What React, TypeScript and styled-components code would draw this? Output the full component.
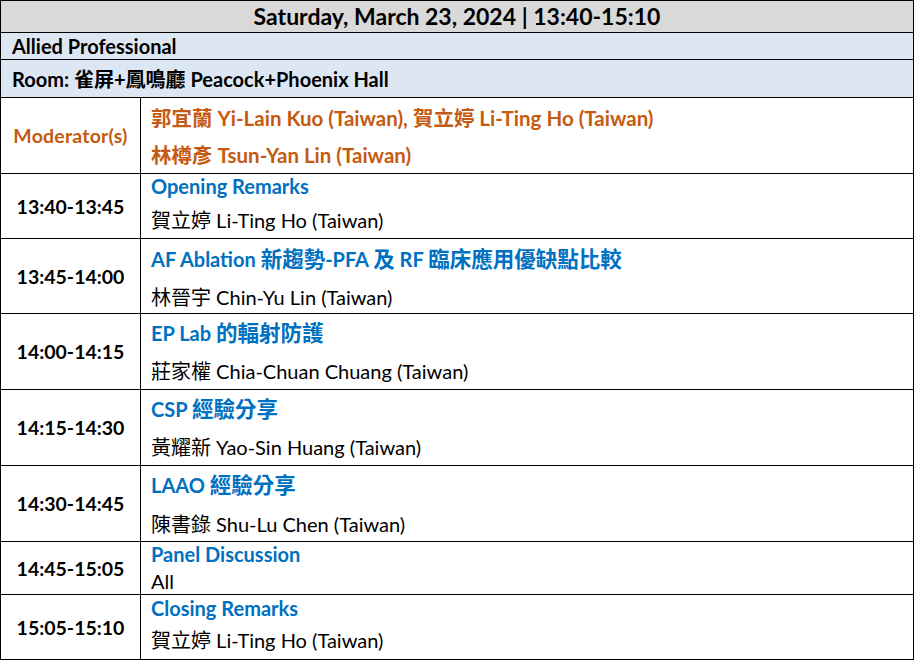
import styled, { createGlobalStyle } from "styled-components";

const GlobalStyle = createGlobalStyle`
  html, body {
    margin: 0;
    padding: 0;
    background: #fff;
  }
  body {
    font-family: Lato, "Noto Sans CJK TC", sans-serif;
    color: #000;
  }
`;

type Session = {
  time: string;
  title: string;
  speaker: string;
  height: number;
  titleLh: number;
  speakerLh: number;
};

const sessions: Session[] = [
  { time: "13:40-13:45", title: "Opening Remarks", speaker: "賀立婷 Li-Ting Ho (Taiwan)", height: 65, titleLh: 24, speakerLh: 45 },
  { time: "13:45-14:00", title: "AF Ablation 新趨勢-PFA 及 RF 臨床應用優缺點比較", speaker: "林晉宇 Chin-Yu Lin (Taiwan)", height: 75, titleLh: 40, speakerLh: 37 },
  { time: "14:00-14:15", title: "EP Lab 的輻射防護", speaker: "莊家權 Chia-Chuan Chuang (Taiwan)", height: 76, titleLh: 38, speakerLh: 39 },
  { time: "14:15-14:30", title: "CSP 經驗分享", speaker: "黃耀新 Yao-Sin Huang (Taiwan)", height: 76, titleLh: 38, speakerLh: 39 },
  { time: "14:30-14:45", title: "LAAO 經驗分享", speaker: "陳書錄 Shu-Lu Chen (Taiwan)", height: 76, titleLh: 38, speakerLh: 41 },
  { time: "14:45-15:05", title: "Panel Discussion", speaker: "All", height: 53, titleLh: 25, speakerLh: 29 },
  { time: "15:05-15:10", title: "Closing Remarks", speaker: "賀立婷 Li-Ting Ho (Taiwan)", height: 65, titleLh: 26, speakerLh: 38 },
];

// wrap runs of Han characters so they can be sized a touch larger than Latin text
const withHan = (text: string) =>
  text.split(/([\u4e00-\u9fff]+)/).map((part, i) =>
    /[\u4e00-\u9fff]/.test(part) ? <Han key={i}>{part}</Han> : part
  );

const App = () => {
  return (
    <>
      <GlobalStyle />
      <Table>
        <DateHeader>Saturday, March 23, 2024 | 13:40-15:10</DateHeader>
        <InfoRow $height={27}>Allied Professional</InfoRow>
        <InfoRow $height={38}>Room: 雀屏+鳳鳴廳 Peacock+Phoenix Hall</InfoRow>

        <Row $height={76}>
          <TimeCell $accent>Moderator(s)</TimeCell>
          <ContentCell $padTop={2}>
            <ModeratorLine>郭宜蘭 Yi-Lain Kuo (Taiwan), 賀立婷 Li-Ting Ho (Taiwan)</ModeratorLine>
            <ModeratorLine>林樽彥 Tsun-Yan Lin (Taiwan)</ModeratorLine>
          </ContentCell>
        </Row>

        {sessions.map((s) => (
          <Row key={s.time} $height={s.height}>
            <TimeCell>{s.time}</TimeCell>
            <ContentCell>
              <TitleLine $lh={s.titleLh}>{withHan(s.title)}</TitleLine>
              <SpeakerLine $lh={s.speakerLh}>{s.speaker}</SpeakerLine>
            </ContentCell>
          </Row>
        ))}
      </Table>
    </>
  );
};

const Table = styled.div`
  display: flex;
  flex-direction: column;
  width: 914px;
  height: 660px;
  box-sizing: border-box;
  border: 1px solid #000;
  overflow: hidden;
`;

const DateHeader = styled.div`
  display: flex;
  justify-content: center;
  align-items: center;
  height: 31px;
  flex-shrink: 0;
  background: #d9d9d9;
  font-size: 23px;
  font-weight: 700;
  line-height: 29px;
`;

const InfoRow = styled.div<{ $height: number }>`
  display: flex;
  align-items: center;
  flex-shrink: 0;
  height: ${(p) => p.$height}px;
  box-sizing: border-box;
  border-top: 1px solid #000;
  background: #dde7f3;
  padding-left: 11px;
  font-size: 20px;
  font-weight: 700;
  white-space: nowrap;
`;

const Row = styled.div<{ $height: number }>`
  display: grid;
  grid-template-columns: 140px 1fr;
  grid-template-rows: minmax(0, 1fr);
  flex-shrink: 0;
  height: ${(p) => p.$height}px;
  box-sizing: border-box;
  border-top: 1px solid #000;
  overflow: hidden;
`;

const TimeCell = styled.div<{ $accent?: boolean }>`
  display: flex;
  justify-content: center;
  align-items: center;
  box-sizing: border-box;
  border-right: 1px solid #000;
  font-size: 19.5px;
  font-weight: 700;
  color: ${(p) => (p.$accent ? "#c55a11" : "#000")};
  letter-spacing: ${(p) => (p.$accent ? "0.2px" : "0")};
`;

const ContentCell = styled.div<{ $padTop?: number }>`
  display: flex;
  flex-direction: column;
  min-height: 0;
  overflow: hidden;
  padding-left: 10px;
  padding-top: ${(p) => p.$padTop ?? 0}px;
  white-space: nowrap;
`;

const ModeratorLine = styled.div`
  flex-shrink: 0;
  line-height: 37px;
  font-size: 20.5px;
  font-weight: 700;
  color: #c55a11;
`;

const TitleLine = styled.div<{ $lh: number }>`
  flex-shrink: 0;
  line-height: ${(p) => p.$lh}px;
  height: ${(p) => p.$lh}px;
  font-size: 20px;
  font-weight: 700;
  color: #0070c0;
`;

const Han = styled.span`
  font-size: 21.5px;
`;

const SpeakerLine = styled.div<{ $lh: number }>`
  flex-shrink: 0;
  line-height: ${(p) => p.$lh}px;
  font-size: 20px;
  color: #000;
`;

export default App;
